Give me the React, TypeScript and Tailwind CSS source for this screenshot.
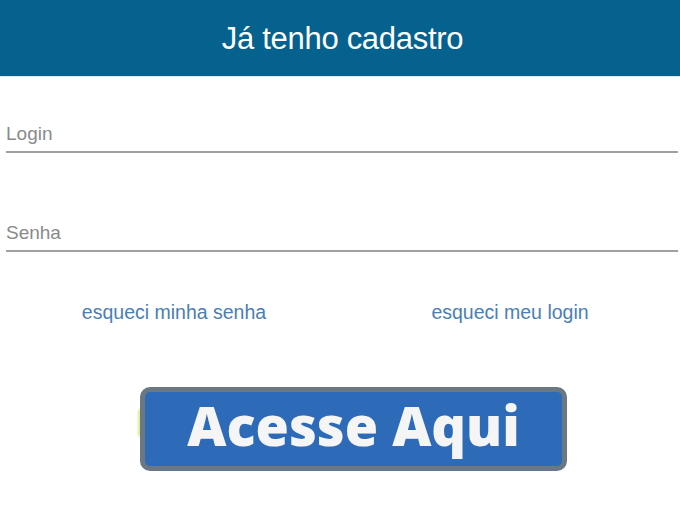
import React from 'react';

const sans = { fontFamily: '"Liberation Sans", Arial, sans-serif' };

const Field = ({ label, className }: { label: string; className?: string }) => (
  <div className={className}>
    <div className="h-[22px] pb-[6px] box-content text-[19px] leading-[22px] text-[#8a8a8a]" style={sans}>
      {label}
    </div>
    <div className="h-[2px] bg-[#a0a0a0]"></div>
  </div>
);

export default function App() {
  return (
    <div className="w-[680px] h-[510px] bg-white overflow-hidden">
      {/* Header */}
      <div className="h-[77px] bg-[#05618d] flex items-center justify-center pl-[5px] border-b border-[#d7ecef]">
        <h1 className="text-white text-[31px] leading-none tracking-[-0.3px]" style={sans}>
          Já tenho cadastro
        </h1>
      </div>

      {/* Form */}
      <div className="pl-[6px] pr-[2px]">
        <Field label="Login" className="mt-[46px]" />
        <Field label="Senha" className="mt-[69px]" />

        <div className="grid grid-cols-2 mt-[49px] text-[19.5px] leading-[22px] text-[#4b7eb5]" style={sans}>
          <a className="text-center">esqueci minha senha</a>
          <a className="text-center">esqueci meu login</a>
        </div>
      </div>

      {/* Button */}
      <div className="relative ml-[140px] mt-[64px] w-[427px]">
        <div className="absolute left-[-2px] top-[22px] w-[6px] h-[28px] rounded-full bg-[#dbeb8a] blur-[1px]"></div>
        <div className="relative h-[84px] rounded-[10px] border-[5px] border-[#6b7782] bg-[#2d6bb9] flex items-center justify-center">
          <span
            className="text-[#f5f5f5] text-[54px] font-extrabold leading-none pb-[8px]"
            style={{ fontFamily: '"Open Sans", sans-serif' }}
          >
            Acesse Aqui
          </span>
        </div>
      </div>
    </div>
  );
}
